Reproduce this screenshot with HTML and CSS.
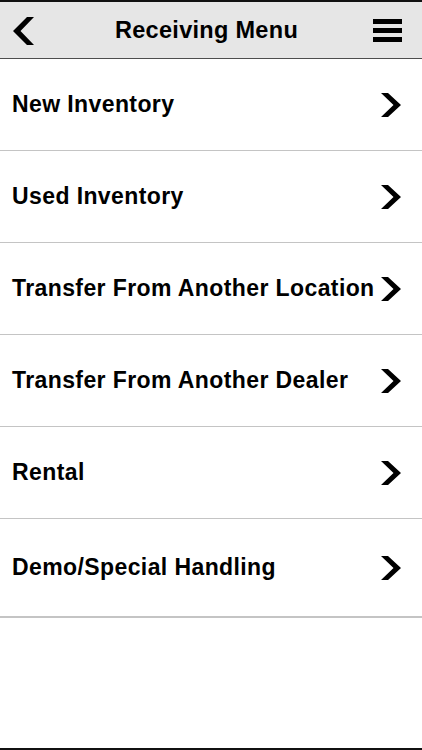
FILE: index.html
```html
<!DOCTYPE html>
<html lang="en">
<head>
  <meta charset="UTF-8" />
  <meta name="viewport" content="width=device-width, initial-scale=1.0" />
  <title>Receiving Menu</title>
  <link rel="stylesheet" href="styles.css">
</head>
<body>
  <div class="screen">
    <header class="nav-bar">
      <button class="nav-btn back" aria-label="Back">
        <svg width="24" height="30" viewBox="0 0 24 30">
          <path d="M15 1 L1 15 L15 29 L22 29 L8.5 15 L22 1 Z" fill="#000"/>
        </svg>
      </button>
      <h1>Receiving Menu</h1>
      <button class="nav-btn menu" aria-label="Menu">
        <span></span><span></span><span></span>
      </button>
    </header>

    <ul class="menu-list">
      <li class="menu-item"><span>New Inventory</span><i class="chev"></i></li>
      <li class="menu-item"><span>Used Inventory</span><i class="chev"></i></li>
      <li class="menu-item"><span>Transfer From Another Location</span><i class="chev"></i></li>
      <li class="menu-item"><span>Transfer From Another Dealer</span><i class="chev"></i></li>
      <li class="menu-item"><span>Rental</span><i class="chev"></i></li>
      <li class="menu-item last"><span>Demo/Special Handling</span><i class="chev"></i></li>
    </ul>
  </div>

  <script>
    // draw the row chevrons
    document.querySelectorAll('.chev').forEach(el => {
      el.innerHTML = '<svg width="22" height="26" viewBox="0 0 22 26"><path d="M1 1 L8 1 L21 13 L8 25 L1 25 L13.5 13 Z" fill="#000"/></svg>';
    });
  </script>
</body>
</html>
```

FILE: styles.css
```css
* {
  box-sizing: border-box;
}

html, body {
  margin: 0;
  padding: 0;
}

body {
  font-family: 'Liberation Sans', Arial, sans-serif;
  background: #fff;
  color: #000;
}

.screen {
  width: 422px;
  height: 750px;
  display: flex;
  flex-direction: column;
  border-top: 2px solid #111;
  border-bottom: 2px solid #111;
}

.nav-bar {
  height: 57px;
  flex: 0 0 57px;
  background: #e6e6e6;
  border-bottom: 1px solid #4d4d4d;
  display: flex;
  align-items: center;
  justify-content: space-between;
  padding: 0 20px 0 12px;
}

.nav-bar h1 {
  margin: 0;
  font-size: 23.5px;
  font-weight: bold;
  letter-spacing: 0.3px;
  padding-left: 4px;
}

.nav-btn {
  background: none;
  border: none;
  padding: 0;
  cursor: pointer;
  display: flex;
}

.nav-btn.back {
  margin-top: 2px;
}

.nav-btn.menu {
  flex-direction: column;
  gap: 4px;
  width: 29px;
}

.nav-btn.menu span {
  display: block;
  height: 5px;
  background: #000;
}

.menu-list {
  list-style: none;
  margin: 0;
  padding: 0;
}

.menu-item {
  height: 92px;
  border-bottom: 1px solid #c4c4c4;
  display: flex;
  align-items: center;
  justify-content: space-between;
  padding: 0 20px 0 12px;
  font-size: 23px;
  font-weight: bold;
  letter-spacing: 0.4px;
  cursor: pointer;
}

.menu-item.last {
  height: 99px;
  border-bottom: 2px solid #c4c4c4;
}

.chev {
  display: flex;
  flex: 0 0 22px;
}
```
